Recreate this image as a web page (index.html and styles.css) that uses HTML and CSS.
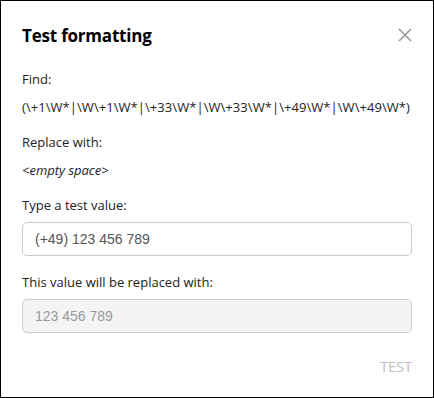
FILE: index.html
```html
<!DOCTYPE html>
<html lang="en">
<head>
    <meta charset="UTF-8">
    <title>Test formatting</title>
    <link rel="stylesheet" href="styles.css">
</head>
<body>
    <div class="dialog">
        <div class="dialog-header">
            <h2>Test formatting</h2>
            <button class="close-btn" aria-label="Close">
                <svg width="14" height="14" viewBox="0 0 14 14">
                    <path d="M1 1L13 13M13 1L1 13" stroke="#9a9a9a" stroke-width="1.6" fill="none"/>
                </svg>
            </button>
        </div>

        <div class="field">
            <div class="label">Find:</div>
            <div class="value">(\+1\W*|\W\+1\W*|\+33\W*|\W\+33\W*|\+49\W*|\W\+49\W*)</div>
        </div>

        <div class="field">
            <div class="label">Replace with:</div>
            <div class="value empty">&lt;empty space&gt;</div>
        </div>

        <div class="field">
            <label class="label" for="testValue">Type a test value:</label>
            <input type="text" id="testValue" class="text-input" value="(+49) 123 456 789">
        </div>

        <div class="field last">
            <label class="label" for="result">This value will be replaced with:</label>
            <input type="text" id="result" class="text-input" value="123 456 789" disabled>
        </div>

        <div class="actions">
            <button class="test-btn" disabled>TEST</button>
        </div>
    </div>
</body>
</html>
```

FILE: styles.css
```css
body {
    margin: 0;
    padding: 0;
    font-family: "Open Sans", "Noto Sans", sans-serif;
    color: #222;
}

.dialog {
    width: 434px;
    height: 398px;
    box-sizing: border-box;
    border: 1px solid #000;
    padding: 21px 21px 0 21px;
    background-color: #fff;
}

.dialog-header {
    display: flex;
    justify-content: space-between;
    align-items: center;
    height: 26px;
    margin-bottom: 21px;
}

.dialog-header h2 {
    margin: 0;
    font-size: 17px;
    font-weight: bold;
    letter-spacing: -0.2px;
    color: #000;
}

.close-btn {
    background: none;
    border: none;
    padding: 0;
    cursor: pointer;
    display: flex;
}

.field {
    margin-bottom: 15px;
}

.field.last {
    margin-bottom: 0;
}

.label {
    display: block;
    font-size: 13px;
    line-height: 20px;
    margin-bottom: 8px;
}

label.label {
    margin-bottom: 7px;
}

.value {
    font-size: 13px;
    line-height: 20px;
    letter-spacing: 0.06px;
    white-space: nowrap;
}

.value.empty {
    font-style: italic;
    letter-spacing: 0;
}

.text-input {
    display: block;
    width: 100%;
    height: 34px;
    box-sizing: border-box;
    padding: 0 12px;
    border: 1px solid #ccc;
    border-radius: 5px;
    font-family: "Liberation Sans", Arial, sans-serif;
    font-size: 14px;
    color: #555;
    background-color: #fff;
    margin-bottom: 16px;
}

.text-input:disabled {
    background-color: #f4f4f4;
    color: #999;
}

.actions {
    display: flex;
    justify-content: flex-end;
    margin-top: 23px;
}

.test-btn {
    background: none;
    border: none;
    padding: 0;
    font-family: "Open Sans", "Noto Sans", sans-serif;
    font-size: 15px;
    letter-spacing: -0.3px;
    color: #c2c2c2;
    cursor: not-allowed;
}
```
